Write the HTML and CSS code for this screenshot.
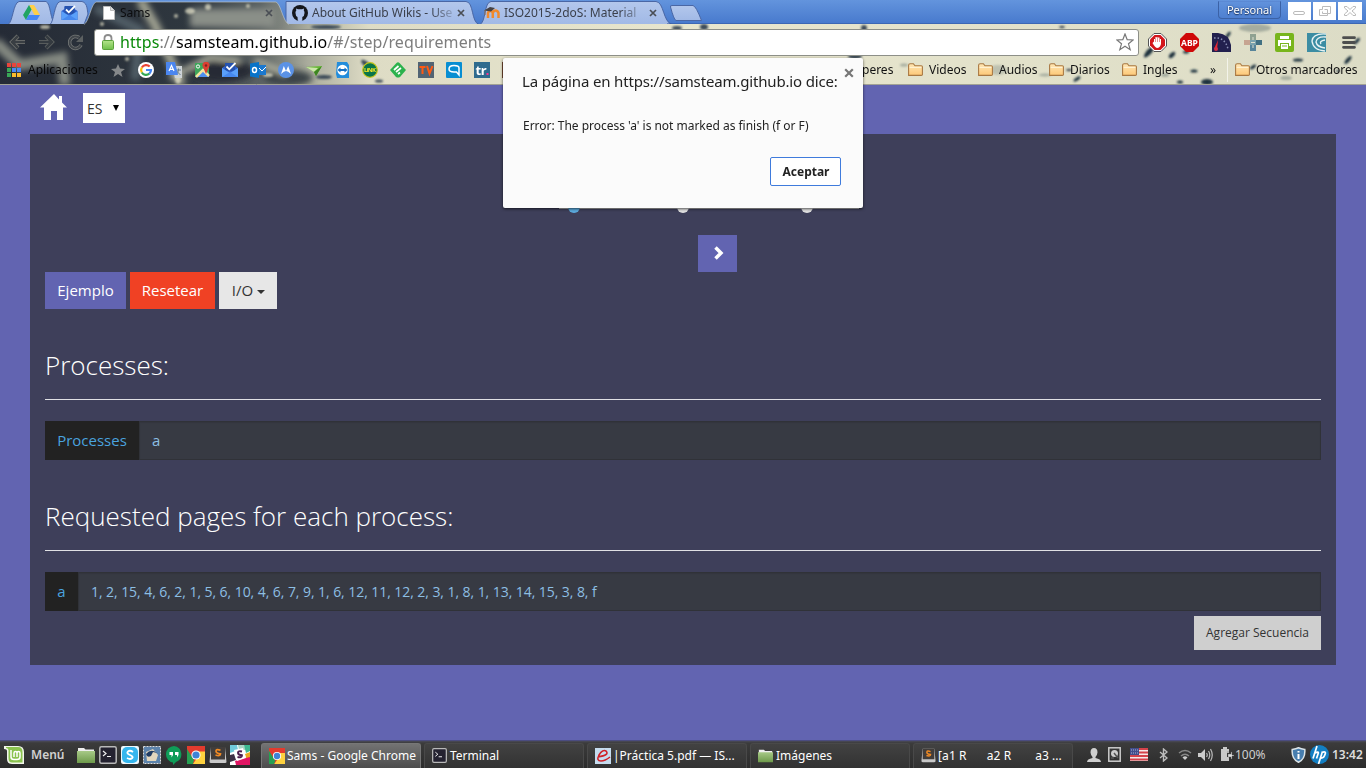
FILE: index.html
```html
<!DOCTYPE html>
<html lang="es">
<head>
<meta charset="utf-8">
<title>Sams</title>
<link rel="stylesheet" href="styles.css">
</head>
<body>
<svg width="0" height="0" class="defs" aria-hidden="true">
  <defs>
    <linearGradient id="gBar" x1="0" y1="0" x2="0" y2="1"><stop offset="0" stop-color="#6394dd"/><stop offset="1" stop-color="#4678cc"/></linearGradient>
    <linearGradient id="gTab" x1="0" y1="0" x2="0" y2="1"><stop offset="0" stop-color="#b3c7ec"/><stop offset="1" stop-color="#a1b9e6"/></linearGradient>
    <linearGradient id="gWall" x1="0" y1="0" x2="1" y2="0"><stop offset="0" stop-color="#252b36"/><stop offset=".14" stop-color="#2f373f"/><stop offset=".19" stop-color="#5b6263"/><stop offset=".225" stop-color="#a9ab9c"/><stop offset=".27" stop-color="#dedcc5"/><stop offset=".5" stop-color="#e8e6ce"/><stop offset="1" stop-color="#dcdcc6"/></linearGradient>
    <linearGradient id="gFold" x1="0" y1="0" x2="0" y2="1"><stop offset="0" stop-color="#ffe7b5"/><stop offset="1" stop-color="#fdc877"/></linearGradient>
    <linearGradient id="gLock" x1="0" y1="0" x2="0" y2="1"><stop offset="0" stop-color="#b5e48c"/><stop offset="1" stop-color="#6fc04a"/></linearGradient>
    <linearGradient id="gGreen" x1="0" y1="0" x2="0" y2="1"><stop offset="0" stop-color="#a7c987"/><stop offset="1" stop-color="#6e9a4b"/></linearGradient>
    <filter id="soft" x="-30%" y="-30%" width="160%" height="160%"><feGaussianBlur stdDeviation="3"/></filter>
    <filter id="soft1" x="-30%" y="-30%" width="160%" height="160%"><feGaussianBlur stdDeviation="1"/></filter>
    <symbol id="folder" viewBox="0 0 16 16"><path d="M1.500 13.500V4Q1.500 2.500 3 2.500H6L7.500 4.500H13.500Q14.500 4.500 14.500 5.500V13Q14.500 13.500 13.500 13.500Z" fill="url(#gFold)" stroke="#a87842"/><path d="M2.500 6H13.500" stroke="#fff3d6"/></symbol>
    <symbol id="chrome" viewBox="0 0 18 18"><path d="M0 0H18V18H0Z" fill="#e33b2e"/><path d="M0 3L7 14L6 18H0Z" fill="#26a052"/><path d="M9 5.500H18V18H6L12 9Z" fill="#ffd23f"/><circle cx="9" cy="9" r="4.600" fill="#fff"/><circle cx="9" cy="9" r="3.600" fill="#3f83d6"/></symbol>
    <symbol id="inbox" viewBox="0 0 16 16"><path d="M0 6L3 4V2H13V4L16 6V15H0Z" fill="#2f5fc9"/><path d="M3 1H13V9H3Z" fill="#2552ae"/><path d="M0 6L8 11L16 6V15H0Z" fill="#5aa0fa"/><path d="M0 15L8 10L16 15Z" fill="#4688ee"/><path d="M4.500 4.500L7.300 7.300L13.500 1" fill="none" stroke="#fff" stroke-width="1.800"/></symbol>
    <symbol id="term" viewBox="0 0 18 18"><rect x=".8" y=".8" width="16.400" height="16.400" rx="1.500" fill="#242230" stroke="#b9b9b9" stroke-width="1.500"/><path d="M4 5L7 7.500L4 10M8 10.500H12" fill="none" stroke="#eee" stroke-width="1.200"/></symbol>
    <symbol id="green" viewBox="0 0 18 18"><path d="M1 4V2H7L8.500 3.500H17V6H1Z" fill="#eee"/><path d="M0 5H18V17H0Z" fill="url(#gGreen)"/></symbol>
    <symbol id="subl" viewBox="0 0 18 18"><path d="M2 1H16L17.500 16Q17.500 17 16 17H2Q.5 17 .5 16Z" fill="#c9c9c9"/><path d="M2 1H16V13.500H2Z" fill="#413d3b"/><path d="M11.500 4.300Q7 2.600 7 5.100T11.500 7.800Q11.500 10.500 6.500 9" fill="none" stroke="#f08a24" stroke-width="1.700"/></symbol>
    <symbol id="x" viewBox="0 0 8 8"><path d="M1 1L7 7M7 1L1 7" stroke="#4a4e55" stroke-width="1.700"/></symbol>
  </defs>
</svg>

<div class="screen">
  <header class="browser">
    <svg class="backdrop" width="1366" height="85" viewBox="0 0 1366 85">
      <clipPath id="cw"><path d="M0 24H84C89 22 91 4 96 2H276C281 4 283 22 289 24H1366V85H0Z"/></clipPath>
      <rect width="1366" height="25" fill="url(#gBar)"/>
      <g fill="url(#gTab)" stroke="#4a67a5">
        <path d="M669 24.500H480C486 22 484 2 491 1.500H656C664 2 663 22 672 24.500Z"/>
        <path d="M477 24.500H286V1.500H466C474 2 471 22 479 24.500Z"/>
        <path d="M8 24.500C13 22 13 3 19 1.500H46C51 3 50 22 56 24.500Z"/>
        <path d="M50 24.500C54 22 54 3 60 1.500H82C88 3 87 11 88 14L84 24.500Z"/>
        <path d="M676 20.500Q674 20 670.500 7Q670 5.500 672 5.500H693Q696 6 701.500 20.500Z"/>
      </g>
      <path d="M667 24.500H1366" stroke="#31549b" stroke-width="2"/>
      <g clip-path="url(#cw)">
        <rect width="1366" height="85" fill="url(#gWall)"/>
        <g filter="url(#soft)">
          <path d="M-5 42L20 65L62 58L65 85" fill="none" stroke="#858a82" stroke-width="11"/>
          <path d="M140 0L155 25L182 85" fill="none" stroke="#a4a694" stroke-width="9"/>
          <path d="M95 8L140 30L135 80" fill="none" stroke="#536069" stroke-width="9"/>
          <path d="M190 18H275" stroke="#8a8f88" stroke-width="18"/>
          <ellipse cx="222" cy="71" rx="32" ry="11" fill="#252c35"/>
          <ellipse cx="288" cy="78" rx="25" ry="8" fill="#3a4247"/>
          <path d="M170 78L210 57L240 61M255 60L286 74" stroke="#b7b8a5" stroke-width="5" fill="none"/>
        </g>
        <g filter="url(#soft1)" fill="#e8e6cd">
          <g opacity=".7"><ellipse cx="190" cy="11" rx="5" ry="3"/><circle cx="208" cy="7" r="3"/><circle cx="176" cy="16" r="2"/><circle cx="248" cy="6" r="2"/><ellipse cx="45" cy="27" rx="5" ry="2"/><circle cx="102" cy="24" r="2"/><ellipse cx="178" cy="79" rx="3" ry="5"/><ellipse cx="268" cy="75" rx="5" ry="2"/><circle cx="127" cy="59" r="2"/></g>
          <g fill="#3c4b58"><ellipse cx="366" cy="64" rx="6" ry="2.500" transform="rotate(40 366 64)"/><ellipse cx="379" cy="81" rx="4" ry="1.500"/><ellipse cx="324" cy="77" rx="8" ry="2"/><ellipse cx="326" cy="27" rx="15" ry="2"/><ellipse cx="677" cy="28" rx="5" ry="2"/><ellipse cx="704" cy="27" rx="4" ry="3"/><ellipse cx="864" cy="28" rx="3" ry="3"/><ellipse cx="855" cy="56" rx="7" ry="3"/></g>
          <g fill="#1e303e"><ellipse cx="1149" cy="52" rx="7" ry="2.500" transform="rotate(-48 1149 52)"/><ellipse cx="1172" cy="55" rx="4" ry="2" transform="rotate(-45 1172 55)"/><ellipse cx="1186" cy="52" rx="3" ry="1.500"/><ellipse cx="1194" cy="71" rx="3.500" ry="1.500"/><ellipse cx="1207" cy="82" rx="6" ry="3"/><ellipse cx="1180" cy="82" rx="3" ry="1.500"/><ellipse cx="1077" cy="79" rx="4" ry="1.500" transform="rotate(-35 1077 79)"/><ellipse cx="1069" cy="70" rx="3" ry="1"/><ellipse cx="1253" cy="67" rx="3.500" ry="1.500" transform="rotate(-35 1253 67)"/><ellipse cx="1298" cy="60" rx="5" ry="1.500"/><ellipse cx="1348" cy="60" rx="5" ry="1.800" transform="rotate(-50 1348 60)"/><ellipse cx="1228" cy="35" rx="4" ry="1.500" transform="rotate(-55 1228 35)"/><ellipse cx="1357" cy="41" rx="4" ry="1.500" transform="rotate(-50 1357 41)"/><ellipse cx="1062" cy="27" rx="3" ry="1"/><ellipse cx="1338" cy="71" rx="2" ry="1"/></g>
          <g fill="#a5ac9f"><ellipse cx="1255" cy="28" rx="16" ry="4"/><ellipse cx="998" cy="70" rx="9" ry="5" opacity=".6"/><ellipse cx="904" cy="65" rx="4" ry="1.500"/><ellipse cx="1165" cy="75" rx="4" ry="2"/><ellipse cx="1286" cy="78" rx="6" ry="2"/><ellipse cx="1045" cy="75" rx="6" ry="1.500"/></g>
        </g>
      </g>
      <path d="M84 24.500C89 22 91 4 96 2H276C281 4 283 22 289 24.500" fill="none" stroke="#c1c8c7" opacity=".65"/>
      <path d="M0 84.500H1366" stroke="#a2a294"/>
    </svg>

    <div class="tabs">
      <div class="tab pin1"><svg width="17" height="15" viewBox="0 0 17 15"><path d="M6 0H11L17 10H11.500Z" fill="#ffcf48"/><path d="M6 0L8.500 4.500L3 15L0 10Z" fill="#1fa463"/><path d="M5.500 10H17L14 15H3Z" fill="#4587f4"/></svg></div>
      <div class="tab pin2"><svg width="17" height="16"><use href="#inbox"/></svg></div>
      <div class="tab t1"><svg width="12" height="14" viewBox="0 0 12 14"><path d="M.5.5H7.500L11.500 4.500V13.500H.5Z" fill="#fff" stroke="#bbb"/><path d="M7.500.5V4.500H11.500" fill="#ddd" stroke="#bbb"/></svg><span class="ttl">Sams</span><svg class="cl" width="8" height="8"><use href="#x"/></svg></div>
      <div class="tab t2"><svg width="16" height="16" viewBox="0 0 16 16"><circle cx="8" cy="8" r="8" fill="#15171c"/><path d="M5.800 15.800V12.700M5.500 12Q3.500 11 3.500 8Q3.300 6.500 4.300 5.500L4 3.500L6 4.300Q8 4 10 4.300L12 3.500L11.800 5.500Q12.600 6.500 12.500 8Q12.500 11 10.300 12V15.800Q8 16.300 5.800 15.800Z" fill="#adc2ea"/></svg><span class="ttl fade">About GitHub Wikis - Use</span><svg class="cl" width="8" height="8"><use href="#x"/></svg></div>
      <div class="tab t3"><svg width="16" height="13" viewBox="0 0 16 13"><path d="M4 12V7Q4.500 5 6.500 5T8.800 7V12M8.800 7Q9.500 4.500 11.500 4.500T14.500 7V12" fill="none" stroke="#f18a2c" stroke-width="2.500"/><path d="M0 4.500L6 1L11 2L7 5.500Z" fill="#454245"/><path d="M1 4V9" stroke="#8b6f58"/></svg><span class="ttl fade">ISO2015-2doS: Material</span><svg class="cl" width="8" height="8"><use href="#x"/></svg></div>
      <div class="personal">Personal</div>
      <div class="wins">
        <svg width="23" height="18" viewBox="0 0 23 18"><path fill="#fff" d="M0 0H23V18H0Z"/><rect x="5.500" y="9.500" width="11" height="3" rx="1.500" fill="none" stroke="#bbb"/></svg>
        <svg width="23" height="18" viewBox="0 0 23 18"><path fill="#fff" d="M0 0H23V18H0Z"/><path d="M9.500 4.500H17.500V11.500H14.500V13.500H6.500V7.500H9.500ZM11.500 7.500H14.500V11.500H9.500V9.500" fill="none" stroke="#bbb"/></svg>
        <svg width="24" height="18" viewBox="0 0 24 18"><path fill="#fff" d="M0 0H24V18H0Z"/><path d="M6.500 4.500H9L12 7.500L15 4.500H17.500V6L14 9L17.500 12V13.500H15L12 10.500L9 13.500H6.500V12L10 9L6.500 6Z" fill="none" stroke="#bbb"/></svg>
      </div>
    </div>

    <div class="toolbar">
      <div class="nav">
        <svg width="17" height="16" viewBox="0 0 17 16"><path d="M9 2L3 8L9 14M3 8H16" fill="none" stroke="#777974" stroke-width="4"/><path d="M9 2L3 8L9 14M3 8H16" fill="none" stroke="#393e43" stroke-width="2.500"/></svg>
        <svg width="17" height="16" viewBox="0 0 17 16"><path d="M8 2L14 8L8 14M14 8H1" fill="none" stroke="#656966" stroke-width="4"/><path d="M8 2L14 8L8 14M14 8H1" fill="none" stroke="#343a40" stroke-width="2.500"/></svg>
        <svg width="17" height="17" viewBox="0 0 17 17"><path d="M14 11A6 6 0 1 1 12 3.500" fill="none" stroke="#777a79" stroke-width="3.500"/><path d="M14 11A6 6 0 1 1 12 3.500" fill="none" stroke="#41464b" stroke-width="2"/><path d="M16 1V8H9Z" fill="#5c6061"/></svg>
      </div>
      <div class="omni">
        <svg width="12" height="16" viewBox="0 0 12 16"><path d="M2.500 8V4Q2.500 1 6 1T9.500 4V8" fill="none" stroke="#8c8c8c" stroke-width="1.800"/><rect x=".5" y="6.500" width="11" height="9" rx="1" fill="url(#gLock)" stroke="#5ba23b"/></svg>
        <span class="url"><b>https</b>://<i>samsteam.github.io</i>/#/step/requirements</span>
        <svg class="star" width="18" height="18" viewBox="0 0 18 18"><path d="M9 1L11.200 6.700L17.200 7L12.500 10.800L14.200 16.700L9 13.300L3.800 16.700L5.500 10.800L.8 7L6.800 6.700Z" fill="#fff" stroke="#777" stroke-width="1.200"/></svg>
      </div>
      <div class="exts">
        <svg width="19" height="19" viewBox="0 0 19 19"><path d="M6 .5H13L18.500 6V13L13 18.500H6L.5 13V6Z" fill="#fff" stroke="#555"/><path d="M6.500 2H12.500L17 6.500V12.500L12.500 17H6.500L2 12.500V6.500Z" fill="#d3161b"/><path d="M6 8.500V6H7V4.500H8.500V4H10V4.500H11.500V6H13V11Q12 15 9 15Q7 14.500 4.500 10Z" fill="#fff"/><path d="M7.500 5V9M9.500 4V9M11.500 6V9" stroke="#dd6668" stroke-width=".7"/></svg>
        <svg width="19" height="19" viewBox="0 0 19 19"><path d="M6 0H13L19 6V13L13 19H6L0 13V6Z" fill="#cf0808"/><text x="9.500" y="12.700" text-anchor="middle" font-family="Noto Sans" font-weight="700" font-size="8.500" fill="#fff">ABP</text></svg>
        <svg width="19" height="19" viewBox="0 0 19 19"><path d="M0 0H6Q17 1 19 12V19H0Z" fill="#22204e"/><path d="M2 5Q13 4 16 16" fill="none" stroke="#8a90b5" stroke-width="1.500" stroke-dasharray="1.500 2"/><path d="M2 16L6 7L5 16Z" fill="#ec2631"/><circle cx="4" cy="16" r="2" fill="#d42f46"/></svg>
        <svg width="18" height="17" viewBox="0 0 18 17"><path d="M6 0H12V6H6Z" fill="#8fa191"/><path d="M0 6H6V11H0Z" fill="#c6a491"/><path d="M6 6H12V11H6Z" fill="#7aa2ad"/><path d="M12 6H18V11H12Z" fill="#417082"/><path d="M6 11H12V17H6Z" fill="#57859a"/><path d="M8.500 3H9.500V6H8.500ZM8.500 11H9.500V14H8.500ZM7 8H11V9H7Z" fill="#dde0cf"/></svg>
        <svg width="19" height="19" viewBox="0 0 19 19"><rect width="19" height="19" rx="2" fill="#78b51c"/><path d="M5 3H14V6H5ZM3 7H16V13H14V10H5V13H3ZM6 11H13V16H6Z" fill="#fff"/><path d="M7 13H12" stroke="#78b51c"/></svg>
        <svg width="19" height="19" viewBox="0 0 19 19"><path fill="#3c8da3" d="M0 0H19V19H0Z"/><path d="M19 1Q6 0 5 8Q6 17 18 18M19 4Q10 3 9 9Q10 14 18 15M18 7Q12 8 14 11" fill="none" stroke="#e8f3f4" stroke-width="1.400"/></svg>
        <svg class="menu" width="14" height="13" viewBox="0 0 14 13"><path d="M1.500 1.700H12.500M1.500 6.500H12.500M1.500 11.300H12.500" stroke="#4d4e4e" stroke-width="2.800" stroke-linecap="round"/></svg>
      </div>
    </div>

    <div class="marks">
      <svg class="apps" width="14" height="14" viewBox="0 0 14 14"><path fill="#e8453c" d="M0 0H4V4H0ZM5 0H9V4H5ZM10 0H14V4H10Z"/><path fill="#3aa757" d="M0 5H4V9H0ZM0 10H4V14H0Z"/><path fill="#4a8af4" d="M5 5H9V9H5ZM10 5H14V9H10Z"/><path fill="#f9bb2d" d="M5 10H9V14H5ZM10 10H14V14H10Z"/></svg>
      <span class="applabel">Aplicaciones</span>
      <div class="favs">
        <svg viewBox="0 0 16 16"><path d="M8 2L10 6.500L15 7L11 10L12.500 15L8 12L3.500 15L5 10L1 7L6 6.500Z" fill="#85888a"/></svg>
        <svg viewBox="0 0 16 16"><circle cx="8" cy="8" r="8" fill="#fff"/><path d="M11.700 4.600A5 5 0 0 0 3.800 5.500" stroke="#ea4335" stroke-width="2.200" fill="none"/><path d="M3.800 5.500A5 5 0 0 0 3.800 10.500" stroke="#fbbc05" stroke-width="2.200" fill="none"/><path d="M3.800 10.500A5 5 0 0 0 11.300 11.700" stroke="#34a853" stroke-width="2.200" fill="none"/><path d="M11.300 11.700Q13 10 13 8H8" stroke="#4285f4" stroke-width="2.200" fill="none"/></svg>
        <svg viewBox="0 0 16 16"><path d="M6 4H16V16H9Z" fill="#cdd3d6"/><path d="M10 8H15M12.500 6.500V8Q12 11 10 13M10.500 9L14.500 13" stroke="#667d8c" fill="none"/><path d="M0 0H9L12 13H0Z" fill="#4b86ef"/><path d="M3 9L5.500 3.500L8 9M4 7.300H7" stroke="#fff" stroke-width="1.200" fill="none"/></svg>
        <svg viewBox="0 0 16 16"><path d="M1 1H15V15H1Z" fill="#3fa65b"/><path d="M1 15L9 7L15 12V15Z" fill="#4e8ff0"/><path d="M2 15L9 8L15 14" fill="none" stroke="#f5e6a1" stroke-width="2.500"/><path d="M12 12L9 5A3.500 3.500 0 1 1 15 5Z" fill="#db3e32"/><circle cx="12" cy="3.500" r="1.200" fill="#82221e"/><circle cx="4" cy="4.500" r="1.600" fill="none" stroke="#fff"/></svg>
        <svg viewBox="0 0 16 16"><use href="#inbox"/></svg>
        <svg viewBox="0 0 16 16"><path d="M9 3H16V13H9Z" fill="#1b78ce"/><path d="M9 6L12 9L16 5" stroke="#fff" fill="none"/><path d="M0 1.500L9 0V16L0 14.500Z" fill="#0873c8"/><ellipse cx="4.500" cy="8" rx="2" ry="2.500" fill="none" stroke="#fff" stroke-width="1.500"/></svg>
        <svg viewBox="0 0 16 16"><circle cx="8" cy="8" r="8" fill="#5b92e6"/><path d="M3 12L5.800 4L8 9L10.200 4L13 12Q10 9 8 9T3 12Z" fill="#fff"/></svg>
        <svg viewBox="0 0 16 16"><path d="M0 5L16 4L10 14L8 10Z" fill="#65b833"/><path d="M0 5L12 6L8 10Z" fill="#cbe5aa"/><path d="M16 4L8 10L10 14Z" fill="#3d8422"/></svg>
        <svg viewBox="0 0 16 16"><path d="M3 0H13L15 3V16H3L2 12Z" fill="#238ddb"/><circle cx="8.500" cy="8" r="5.200" fill="#fff"/><path d="M3.500 8L6.500 5.500V7H10.500V5.500L13.500 8L10.500 10.500V9H6.500V10.500Z" fill="#1571c4"/></svg>
        <svg viewBox="0 0 16 16"><circle cx="8" cy="8" r="7.300" fill="#08754a" stroke="#c5c51b" stroke-width="1.200"/><text x="8" y="10.300" text-anchor="middle" font-family="Noto Sans" font-size="6" font-weight="700" fill="#f5e826" textLength="12">LiNK</text></svg>
        <svg viewBox="0 0 16 16"><path d="M6.500 1Q8 -.5 9.500 1L16 8L10 15Q8 16 6 15L0 8Z" fill="#2bb24c"/><path d="M4 8L8.500 4M6 10L11 6M8 12L10 10.500" stroke="#fff" stroke-width="1.700"/></svg>
        <svg viewBox="0 0 16 16"><path fill="#526473" d="M0 0H16V16H0Z"/><path d="M1.500 5H7.500M4.500 5V12M9 4L11.500 11.500L14.500 4" fill="none" stroke="#ff5a13" stroke-width="2"/></svg>
        <svg viewBox="0 0 16 16"><rect width="16" height="16" rx="1" fill="#078ed2"/><path d="M13 13V6Q13 3.500 8 3.500T3 7Q3 10 8 10H10.500Z" fill="none" stroke="#fff" stroke-width="1.500"/></svg>
        <svg viewBox="0 0 16 16"><path fill="#2f6b8e" d="M0 0H16V16H0Z"/><text x="1.500" y="12.500" font-family="Noto Sans" font-size="13" font-weight="700" fill="#fff" textLength="11">tr</text><path fill="#fc3390" d="M12.500 11H14.500V13H12.500Z"/></svg>
        <svg viewBox="0 0 16 16"><path fill="#704530" d="M0 0H16V16H0Z"/></svg>
      </div>
      <div class="folders">
        <span class="fd f0">peres</span>
        <svg class="fi" width="17" height="17"><use href="#folder"/></svg><span class="fd f1">Videos</span>
        <svg class="fi" width="17" height="17"><use href="#folder"/></svg><span class="fd f2">Audios</span>
        <svg class="fi" width="17" height="17"><use href="#folder"/></svg><span class="fd f3">Diarios</span>
        <svg class="fi" width="17" height="17"><use href="#folder"/></svg><span class="fd f4">Ingles</span>
        <span class="more">»</span>
        <svg class="fi" width="17" height="17"><use href="#folder"/></svg><span class="fd f5">Otros marcadores</span>
      </div>
    </div>
  </header>

  <main class="page">
    <div class="topnav">
      <svg width="28" height="28" viewBox="0 0 28 28"><path d="M14 1L0 14.500H4V27H11V18H17V27H23V14.500H27L22 9.500V3H19V6.500Z" fill="#fff"/></svg>
      <div class="select">ES<svg width="6" height="6" viewBox="0 0 6 6"><path d="M0 0H6L3 6Z" fill="#000"/></svg></div>
    </div>
    <section class="panel">
      <svg class="steps" width="300" height="14" viewBox="0 0 300 14"><path d="M0 7.500H300" stroke="#b8b8bb"/><circle cx="15" cy="6" r="6" fill="#5cabdf"/><circle cx="124" cy="6" r="6" fill="#e2e2e2"/><circle cx="248" cy="6" r="6" fill="#e2e2e2"/></svg>
      <div class="next"><svg width="12" height="14" viewBox="0 0 12 14"><path d="M2.500 1.500L8 7L2.500 12.500" fill="none" stroke="#fff" stroke-width="3.500"/></svg></div>
      <div class="btns"><span class="btn b1">Ejemplo</span><span class="btn b2">Resetear</span><span class="btn b3">I/O<svg width="8" height="4" viewBox="0 0 8 4"><path d="M0 0H8L4 4Z" fill="#333"/></svg></span></div>
      <h2 class="h h1"><span>Processes:</span></h2>
      <div class="field"><span class="addon a1">Processes</span><span class="val v1">a</span></div>
      <h2 class="h h2"><span>Requested pages for each process:</span></h2>
      <div class="field"><span class="addon a2">a</span><span class="val v2">1, 2, 15, 4, 6, 2, 1, 5, 6, 10, 4, 6, 7, 9, 1, 6, 12, 11, 12, 2, 3, 1, 8, 1, 13, 14, 15, 3, 8, f</span></div>
      <div class="add">Agregar Secuencia</div>
    </section>
  </main>

  <footer class="taskbar">
    <svg class="mint" width="20" height="20" viewBox="0 0 20 20"><path d="M0 1H14Q20 1 20 7V19H8Q3 19 3 14V6Q3 4 0 4Z" fill="#f3f6ec"/><path d="M2 2H14Q18.500 2 18.500 7V17.500H8Q4.500 17.500 4.500 13V5Q4 3 2 3Z" fill="#8bc34f"/><path d="M7 5V12Q7 14.500 10 14.500H13Q16 14.500 16 12V8Q16 6.500 14.500 6.500T13 8V12M13 8Q13 6.500 11.500 6.500T10 8V12" fill="none" stroke="#fff" stroke-width="1.500"/></svg>
    <span class="mn">Menú</span>
    <div class="launch">
      <svg viewBox="0 0 18 18"><use href="#green"/></svg>
      <svg viewBox="0 0 18 18"><use href="#term"/></svg>
      <svg viewBox="0 0 18 18"><rect width="18" height="18" rx="2" fill="#eef8fd"/><rect x="1" y="1" width="16" height="16" rx="5" fill="#35b6ee"/><path d="M12 6Q9 3.800 7 5.500T9 9T11 12.300T6 12" fill="none" stroke="#fff" stroke-width="1.800"/></svg>
      <svg viewBox="0 0 18 18"><rect x=".5" y=".5" width="17" height="17" fill="#5c83ab" stroke="#ddd" stroke-dasharray="2 1"/><path d="M3 6L10 3L15 9L13 15H4Z" fill="#e3d7bd"/><path d="M3 8Q8 2 14 7L10 6L8 10Q4 12 3 8Z" fill="#203c63"/></svg>
      <svg viewBox="0 0 18 18"><path d="M9 0A8.300 8.300 0 0 1 11 16L8 19V16.500A8.300 8.300 0 0 1 9 0Z" fill="#0f9d58"/><path d="M4.500 6H8V9L6.500 11.500V9H4.500ZM10 6H13.500V9L12 11.500V9H10Z" fill="#fff"/></svg>
      <svg viewBox="0 0 18 18"><use href="#chrome"/></svg>
      <svg viewBox="0 0 18 18"><use href="#subl"/></svg>
      <svg class="slack" viewBox="0 0 20 20"><path fill="#fff" d="M0 0H20V20H0Z"/><path d="M0 0H7L8 5L0 8Z" fill="#70cadb"/><path d="M8 0H14L16 5L9 5Z" fill="#a7d5c5"/><path d="M14 0H20V6L16 8Z" fill="#3eb991"/><path d="M0 10L4 9L6 15L0 17Z" fill="#3d3046"/><path d="M5 16L20 11V20H6Z" fill="#e01563"/><path d="M15 9L20 7V12L16 13Z" fill="#e9a820"/><path d="M4 5L13 3L16 13L7 16Z" fill="#fff"/><path d="M12 6.500Q8 5.500 8 7.800T12 10.300Q12 13 7.500 12" stroke="#4b1d4d" stroke-width="1.900" fill="none"/></svg>
    </div>
    <div class="tasks">
      <div class="task on"><svg width="16" height="16"><use href="#chrome"/></svg><span class="k1">Sams - Google Chrome</span></div>
      <div class="task"><svg width="15" height="15"><use href="#term"/></svg><span class="k2">Terminal</span></div>
      <div class="task"><svg width="16" height="16" viewBox="0 0 16 16"><path fill="#c5dcef" d="M0 0H16V16H0Z"/><path d="M3 9Q15 7 11 3Q8 1 4 7Q1 13 6 13Q10 13 15 9" fill="none" stroke="#d02027" stroke-width="1.600"/></svg><span class="k3">|Práctica 5.pdf — IS...</span></div>
      <div class="task"><svg width="15" height="15"><use href="#green"/></svg><span class="k4">Imágenes</span></div>
      <div class="task"><svg width="15" height="15"><use href="#subl"/></svg><span class="k5">[a1 R</span><span class="k6">a2 R</span><span class="k7">a3 ...</span></div>
    </div>
    <div class="tray">
      <svg width="14" height="14" viewBox="0 0 14 14"><path d="M3.500 4.500Q3.500 0 7 0T10.500 4.500Q10 8 8.500 9V10Q14 11 14 14H0Q0 11 5.500 10V9Q4 8 3.500 4.500Z" fill="#cfcfcf"/></svg>
      <svg width="13" height="15" viewBox="0 0 13 15"><rect x=".8" y=".8" width="11.400" height="13.400" fill="none" stroke="#ccc" stroke-width="1.500"/><circle cx="6.500" cy="6.500" r="3.500" fill="#ccc"/><path d="M6 6L10 11M3 11H6" stroke="#555" stroke-width="1.500"/></svg>
      <svg width="18" height="13" viewBox="0 0 18 13"><path fill="#f4e9e9" d="M0 0H18V13H0Z"/><path d="M0 1H18M0 4.500H18M0 8H18M0 11.500H18" stroke="#d4434b" stroke-width="1.800"/><path fill="#414d8b" d="M0 0H9V7H0Z"/><path d="M1 2H8M1 5H8" stroke="#aeb3d4" stroke-dasharray="1 1"/></svg>
      <svg width="9" height="14" viewBox="0 0 9 14"><path d="M1 4L8 10L4.500 13V1L8 4L1 10" fill="none" stroke="#bdbdbd" stroke-width="1.400"/></svg>
      <svg width="14" height="12" viewBox="0 0 14 12"><path d="M1 4Q7 -1 13 4M3 7Q7 3.500 11 7" fill="none" stroke="#888" stroke-width="1.500"/><path d="M4.500 8.500Q7 6 9.500 8.500L7 11Z" fill="#ccc"/></svg>
      <svg width="15" height="14" viewBox="0 0 15 14"><path d="M0 5H3L7 1V13L3 9H0Z" fill="#ccc"/><path d="M8.500 5Q10 7 8.500 9M10.500 3Q13 7 10.500 11M12.500 1Q16 7 12.500 13" fill="none" stroke="#bbb" stroke-width="1.200"/></svg>
      <svg width="14" height="15" viewBox="0 0 14 15"><path d="M3 0H7V2H9V6H7V10H9V14H1V2H3Z" fill="#c8c8c8"/><path d="M8 7V4M8 7H11V5H12V8H14V9H12V12H11V10H8Z" fill="#ddd" stroke="#555" stroke-width=".4"/></svg>
      <span class="pct">100%</span>
      <svg width="15" height="16" viewBox="0 0 15 16"><path d="M7.500.8Q10 2 13.800 2.500Q14.500 12 7.500 15.200Q.5 12 1.200 2.500Q5 2 7.500.8Z" fill="#477eaf" stroke="#dbe4e8" stroke-width="1.500"/><path d="M7.500 4V5.500M7.500 7V12" stroke="#fff" stroke-width="2"/></svg>
      <svg width="19" height="19" viewBox="0 0 19 19"><circle cx="9.500" cy="9.500" r="9.500" fill="#137fc3"/><path d="M7 1L3 13.500M5 8Q9 6 8.200 8.500L6.500 13.500M12.500 6.500L8.500 19M11.500 7.500Q16 6 15.300 8.500Q14 13.500 10.500 13" fill="none" stroke="#fff" stroke-width="1.700"/></svg>
      <span class="clock">13:42</span>
    </div>
  </footer>

  <div class="dialog">
    <svg class="dx" width="10" height="10" viewBox="0 0 10 10"><path d="M1.200 1.200L8.800 8.800M8.800 1.200L1.200 8.800" stroke="#777" stroke-width="2.200"/></svg>
    <div class="dt"><span>La página en https://samsteam.github.io dice:</span></div>
    <div class="dm"><span>Error: The process 'a' is not marked as finish (f or F)</span></div>
    <div class="ok">Aceptar</div>
  </div>
</div>
</body>
</html>
```
FILE: styles.css
```css
* { box-sizing: border-box; }
body { margin: 0; font-family: "Noto Sans", "Open Sans", sans-serif; font-size: 12px; }
svg { flex: none; display: block; }
span { white-space: pre; }
.defs { position: absolute; }
.screen { position: relative; width: 1366px; height: 768px; overflow: hidden; display: flex; flex-direction: column; background: #6264b1; }

.browser { position: relative; height: 85px; flex: none; }
.backdrop { position: absolute; left: 0; top: 0; }
.tabs, .toolbar, .marks { position: relative; display: flex; align-items: center; }
.tabs { height: 25px; }
.tab { display: flex; align-items: center; height: 25px; color: #3b404c; }
.ttl { margin-left: 4px; line-height: 17px; flex: 1; }
.fade { -webkit-mask-image: linear-gradient(90deg, #000 84%, transparent 104%); mask-image: linear-gradient(90deg, #000 84%, transparent 104%); }
.pin1 { padding-left: 23px; width: 40px; }
.pin2 { margin-left: 21px; width: 17px; }
.t1 { margin-left: 25px; width: 170px; color: #0c0d0f; }
.t1 .ttl { margin-left: 5px; }
.t2 { margin-left: 19px; width: 173px; }
.t2 .ttl { width: 142px; flex: none; letter-spacing: -.03px; }
.t3 { margin-left: 19px; width: 173px; }
.t3 .ttl { width: 138px; flex: none; }
.cl { margin-left: auto; }
.personal { margin-left: 561px; width: 63px; height: 18px; margin-top: -5px; border: 1px solid #3b62a6; border-top-color: #5b89d4; border-radius: 0 0 4px 4px; color: #fff; text-align: center; font-size: 11px; line-height: 16px; text-shadow: 0 0 2px #1f3966, 0 1px 1px #1f3966; }
.wins { display: flex; gap: 2px; margin: -4px 0 0 7px; }

.toolbar { height: 34px; }
.nav { display: flex; gap: 12px; margin-left: 9px; width: 85px; align-items: center; }
.omni { width: 1045px; height: 27px; background: #fff; border: 1px solid #8d8f88; border-radius: 3px; display: flex; align-items: center; padding-left: 7px; }
.url { margin-left: 6px; font-size: 16px; color: #7d7d7d; line-height: 22px; letter-spacing: .09px; }
.url b { font-weight: 400; color: #0b8a0b; }
.url i { font-style: normal; color: #000; }
.star { margin-left: auto; margin-right: 4px; }
.exts { display: flex; align-items: center; margin-left: 9px; gap: 13px; }
.menu { margin-left: 3px; }

.marks { height: 26px; margin-top: -2px; }
.apps { margin-left: 7px; }
.applabel { margin-left: 7px; width: 82px; margin-top: -1px; color: #080808; }
.favs { display: flex; gap: 12px; width: 408px; }
.favs svg { width: 16px; height: 16px; }
.folders { display: flex; align-items: center; margin: -1px 0 0 344px; color: #111; }
.fi { margin-right: 5px; }
.fd { flex: none; line-height: 17px; }
.f0 { width: 45px; }
.f1 { width: 48px; }
.f2 { width: 49px; }
.f3 { width: 51px; }
.f4 { width: 67px; }
.more { width: 18px; border-right: 1px solid #f3f3ea; margin-right: 6px; line-height: 24px; }

.page { flex: 1; padding: 0 30px; }
.topnav { height: 49px; padding-left: 10px; display: flex; align-items: center; }
.topnav > svg { margin-top: -5px; }
.select { margin-left: 15px; margin-top: -3px; width: 42px; height: 30px; background: #fff; color: #333; font: 14px/31px "Open Sans", sans-serif; padding-left: 4px; display: flex; }
.select svg { margin: 12px 0 0 11px; }
.panel { height: 531px; background: #3e3f5a; padding: 67px 15px 0; display: flex; flex-direction: column; font-family: "Open Sans", sans-serif; font-size: 15px; }
.steps { margin-left: 514px; flex: none; }
.next { margin: 20px 0 0 653px; width: 39px; height: 37px; background: #6264b1; display: flex; align-items: center; justify-content: center; flex: none; padding: 0 0 1px 3px; }
.btns { display: flex; gap: 4px; }
.btn { height: 37px; line-height: 37px; color: #fff; text-align: center; }
.b1 { width: 81px; background: #6264b1; }
.b2 { width: 85px; background: #f04124; }
.b3 { width: 58px; background: #e7e7e7; color: #333; display: flex; align-items: center; justify-content: center; gap: 4px; padding-left: 1px; }
.b3 svg { margin-top: 2px; }
.h { margin: 0 0 21px; height: 53px; border-bottom: 1px solid #e0e0e4; color: #fff; font-weight: 300; font-size: 26px; line-height: 36px; }
.h1 { margin-top: 38px; }
.h2 { margin-top: 38px; }
.field { height: 39px; display: flex; flex: none; line-height: 39px; }
.addon { background: #222; color: #4aa3df; text-align: center; }
.a1 { width: 94px; }
.a2 { width: 33px; }
.val { flex: 1; background: #373a43; border: 1px solid #303238; line-height: 37px; padding-left: 12px; color: #8dbfe3; box-shadow: inset 0 1px 1px rgba(0,0,0,.08); }
.v2 { font-size: 14px; letter-spacing: -.06px; }
.add { align-self: flex-end; margin-top: 5px; width: 127px; height: 34px; line-height: 34px; background: #cfcfcf; color: #333; font-size: 12px; text-align: center; }

.taskbar { height: 28px; flex: none; display: flex; align-items: center; background: linear-gradient(#4b4b59 0, #3b3b3b 2px, #2c2c2c); border-top: 1px solid #4b4c80; color: #e6e6e6; }
.mint { margin-left: 4px; }
.mn { margin-left: 7px; width: 46px; font-size: 12px; font-weight: 600; color: #d0d0d0; }
.launch { display: flex; gap: 4px; width: 184px; align-items: center; }
.launch svg { width: 18px; height: 18px; overflow: visible; }
.launch .slack { width: 20px; height: 20px; margin-left: -1px; }
.tasks { display: flex; gap: 3px; }
.task { width: 160px; height: 25px; border: 1px solid #494949; border-bottom: 0; border-radius: 3px 3px 0 0; background: linear-gradient(#424242, #323232); display: flex; align-items: center; padding-left: 7px; color: #fff; font-size: 12px; margin-top: 1px; overflow: hidden; }
.task span { margin-left: 2px; }
.task .k2, .task .k4 { margin-left: 3px; }
.task .k5 { letter-spacing: .1px; }
.task .k6 { margin-left: 20px; letter-spacing: .1px; }
.task .k7 { margin-left: 24px; }
.on { background: linear-gradient(#737373, #4c4c4c); border-color: #777; }
.tray { display: flex; align-items: center; margin-left: 14px; gap: 7px; flex: none; width: 279px; }
.tray svg:nth-child(3) { margin-left: 2px; }
.tray svg:nth-child(4) { margin-left: 4px; }
.tray svg:nth-child(5) { margin-left: 3px; }
.tray svg:nth-child(6) { margin-left: -1px; }
.pct { font-size: 12px; margin-left: -6px; width: 49px; color: #cfcfcf; }
.tray svg:nth-child(10) { margin-left: -3px; }
.clock { font-weight: 600; margin-left: -4px; font-size: 12px; color: #ddd; }

.dialog { position: absolute; left: 503px; top: 58px; width: 360px; height: 150px; background: #fbfbfb; border-radius: 2px; box-shadow: 0 1px 3px rgba(0,0,0,.65); display: flex; flex-direction: column; color: #222; }
.dx { position: absolute; right: 9px; top: 10px; }
.dt { margin: 12px 0 0 19px; font-size: 15px; line-height: 22px; letter-spacing: -.16px; }
.dm { margin: 25px 0 0 20px; line-height: 18px; letter-spacing: -.02px; }
.ok { margin: 22px 22px 0 auto; width: 71px; height: 29px; border: 1px solid #3f7bdc; border-radius: 2px; text-align: center; line-height: 27px; font-weight: 700; background: #fff; padding-left: 1px; }
```
